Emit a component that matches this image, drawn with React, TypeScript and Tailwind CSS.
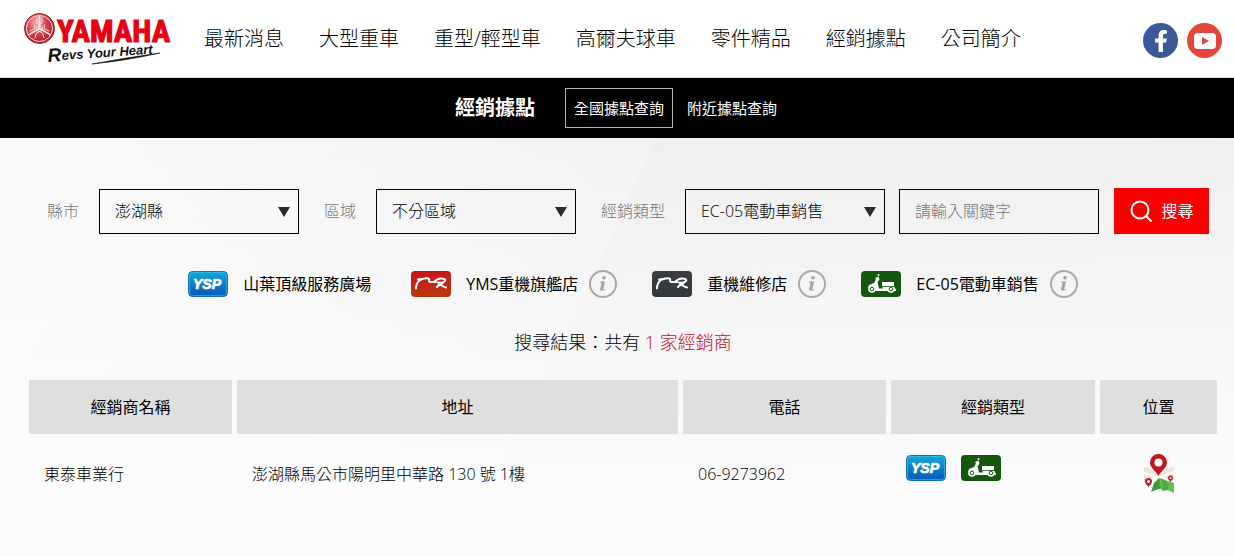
import { FaFacebookF } from 'react-icons/fa'

const navItems = ['最新消息', '大型重車', '重型/輕型車', '高爾夫球車', '零件精品', '經銷據點', '公司簡介']

const filters = [
  { id: 'city', label: '縣市', options: ['澎湖縣'] },
  { id: 'area', label: '區域', options: ['不分區域'] },
  { id: 'type', label: '經銷類型', options: ['EC-05電動車銷售'] },
]

const Logo = () => (
  <svg width="148" height="56" viewBox="0 0 148 56" role="img" aria-label="Yamaha">
    <defs>
      <radialGradient id="emblem" cx="40%" cy="30%" r="75%">
        <stop offset="0" stopColor="#f4b3b3" />
        <stop offset="0.45" stopColor="#d8424a" />
        <stop offset="1" stopColor="#b3121d" />
      </radialGradient>
    </defs>
    <circle cx="15.500" cy="17.500" r="15" fill="url(#emblem)" stroke="#8d2a30" />
    <circle cx="15.500" cy="17.500" r="13" fill="none" stroke="#f3dada" />
    <g fill="none" stroke="#f5e6e6" strokeLinecap="round">
      <path strokeWidth="2" d="M15.500 17.500V5.500M15.500 17.500l10.500 6M15.500 17.500L5 23.500" />
      <path strokeWidth="1" d="M13 6.500v5l2.500 2.500 2.500-2.500v-5M25 20l-5-2.500.5-3.500M6 20l5-2.500-.5-3.500M11 27l1.500-5 3-1.500 3 1.500 1.500 5" />
      <circle cx="15.500" cy="17.500" r="3" />
    </g>
    <text
      x="33"
      y="31"
      fontFamily="'Liberation Sans Narrow', 'Roboto Condensed', 'Liberation Sans', sans-serif"
      fontSize="31"
      fontWeight="700"
      fill="#e60012"
      stroke="#e60012"
      strokeWidth="1"
    >
      YAMAHA
    </text>
    <g transform="rotate(-4 24 50)" fill="#111" fontFamily="'Liberation Sans', sans-serif" fontStyle="italic" fontWeight="700">
      <text x="24" y="51" fontSize="19">
        R
      </text>
      <text x="38" y="50" fontSize="13">
        evs Your Heart
      </text>
    </g>
    <path d="M68 53Q100 47 136 42Q100 50 68 53z" fill="#111" stroke="#111" strokeWidth="0.6" />
  </svg>
)

const YoutubeIcon = () => (
  <svg width="22" height="16" viewBox="0 0 22 16" aria-hidden="true">
    <rect width="22" height="16" rx="4" fill="#fff" />
    <path d="M8 4v8l7-4z" fill="#e2473b" />
  </svg>
)

const YspBadge = () => (
  <svg width="40" height="26" viewBox="0 0 40 26" role="img" aria-label="YSP" className="shrink-0">
    <defs>
      <linearGradient id="ysp" x1="0" y1="0" x2="0" y2="1">
        <stop offset="0" stopColor="#12a8dc" />
        <stop offset="1" stopColor="#0457b8" />
      </linearGradient>
    </defs>
    <rect x="0.5" y="0.5" width="39" height="25" rx="4" fill="url(#ysp)" stroke="#0a76b4" />
    <rect x="1.500" y="1.500" width="37" height="23" rx="3" fill="none" stroke="#3fc4ee" strokeOpacity="0.6" />
    <text
      x="19"
      y="18"
      textAnchor="middle"
      fontFamily="'Liberation Sans', sans-serif"
      fontSize="14"
      fontWeight="700"
      fontStyle="italic"
      fill="#fff"
      stroke="#fff"
      strokeWidth="0.7"
    >
      YSP
    </text>
  </svg>
)

const MrBadge = ({ id, from, to }: { id: string; from: string; to: string }) => (
  <svg width="40" height="26" viewBox="0 0 40 26" aria-hidden="true" className="shrink-0">
    <defs>
      <linearGradient id={id} x1="0" y1="0" x2="0" y2="1">
        <stop offset="0" stopColor={from} />
        <stop offset="1" stopColor={to} />
      </linearGradient>
    </defs>
    <rect width="40" height="26" rx="4" fill={`url(#${id})`} />
    <g fill="none" stroke="#fff" strokeWidth="2" strokeLinecap="round" strokeLinejoin="round">
      <path d="M5 17.500c0-4 2-7 4-8.500M7 8.500l4-.5" />
      <path d="M10 8.500c3-1 7-2 8-.5s-1 2.500 1 3 4-1 6 0" />
      <path d="M23 11c2-2 4-3.500 7-3.500 3 0 5 1 4 2.500s-4 2-7 1.500" />
      <path d="M32 11.500c-1 2-5 2.500-6 4.500M28 13.500c2 0 4 2.500 7 3" />
    </g>
  </svg>
)

const ScooterBadge = () => (
  <svg width="40" height="26" viewBox="0 0 40 26" role="img" aria-label="EC-05" className="shrink-0">
    <rect width="40" height="26" rx="4" fill="#14570f" />
    <g fill="#fff">
      <circle cx="17.500" cy="4" r="1" />
      <path d="M14 7l3.500-1.500 1 3-2 3 1.500 6h4l-1-2.500V11h12v5.500l2 2V20H15l-3-1-1-2.500-4 .5 1-3 5-2 2-3.500z" />
      <circle cx="11" cy="18" r="3.800" />
      <circle cx="30" cy="18" r="3.800" />
    </g>
    <path d="M21 15.500h12" stroke="#14570f" strokeWidth="0.8" />
    <circle cx="11" cy="18" r="1.800" fill="none" stroke="#14570f" />
    <circle cx="30" cy="18" r="1.800" fill="none" stroke="#14570f" />
  </svg>
)

const InfoButton = ({ label }: { label: string }) => (
  <button type="button" aria-label={label} className="ml-[11px]">
    <svg width="28" height="28" viewBox="0 0 28 28" fill="none" className="block">
      <circle cx="14" cy="14" r="13" stroke="#a9a9a9" strokeWidth="2" />
      <circle cx="15" cy="7.800" r="1.800" fill="#a3a3a3" />
      <path d="M11 12h2.500l-1.500 8" stroke="#a3a3a3" strokeWidth="1" />
      <path d="M14.500 11.500l-2 8.500" stroke="#a3a3a3" strokeWidth="3" />
      <path d="M11.500 20h4.500" stroke="#a3a3a3" />
    </svg>
  </button>
)

const MapIcon = () => (
  <svg width="32" height="40" viewBox="0 0 32 40" aria-hidden="true">
    <path d="M1 13l8 2 7 6 8-6 7-2v13l-9-2-7-3-8 4-6 3z" fill="#ebe6dd" />
    <path d="M1 19l14 4M31 18l-13 5" fill="none" stroke="#fff" strokeWidth="2" />
    <path d="M8 38l3-9 5-5 3 1 1 9-6 1.500z" fill="#3f9b3a" />
    <path d="M16 24l15 5v10l-6-3-5 1-2-2z" fill="#64bb4f" />
    <path d="M19 25l1 12 5-1.500-1-8z" fill="#4fa844" />
    <path d="M15.500 22C13 17 7 14 7 8.500a8.500 8.500 0 0 1 17 0C24 14 18 17 15.500 22z" fill="#c4161c" />
    <circle cx="15.500" cy="8.500" r="4" fill="#fff" />
    <path d="M5.500 33C4.500 31 2 30 2 27.500a3.500 3.500 0 0 1 7 0C9 30 6.500 31 5.500 33z" fill="#c4161c" />
    <circle cx="5.500" cy="27.500" r="1.500" fill="#fff" />
    <path d="M27.500 28C27 26.500 25 26 25 24a2.500 2.500 0 0 1 5 0c0 2-2 2.500-2.500 4z" fill="#c4161c" />
    <circle cx="27.500" cy="24" r="1" fill="#fff" />
  </svg>
)

const Header = () => (
  <header className="flex h-[78px] items-center border-b border-[#d8d8d8] bg-white pr-3 pl-6">
    <a href="#home" className="shrink-0">
      <Logo />
    </a>
    <nav className="ml-8 flex gap-[35px] text-xl font-light whitespace-nowrap text-black">
      {navItems.map((item) => (
        <a key={item} href="#nav">
          {item}
        </a>
      ))}
    </nav>
    <div className="ml-auto flex gap-[9px] pt-1">
      <a
        href="#facebook"
        aria-label="Facebook"
        className="flex size-[35px] items-center justify-center rounded-full bg-[#3b5998] text-white"
      >
        <FaFacebookF size={22} />
      </a>
      <a
        href="#youtube"
        aria-label="YouTube"
        className="flex size-[35px] items-center justify-center rounded-full bg-[#e2473b]"
      >
        <YoutubeIcon />
      </a>
    </div>
  </header>
)

const SubNav = () => (
  <div className="flex h-[60px] items-center justify-center bg-black pr-0.5 text-white">
    <h1 className="mr-[30px] text-xl font-bold">經銷據點</h1>
    <a href="#all" className="flex h-10 items-center border border-[#b0b0b0] px-2 text-[15px]">
      全國據點查詢
    </a>
    <a href="#near" className="ml-[14px] text-[15px]">
      附近據點查詢
    </a>
  </div>
)

const SearchForm = () => (
  <form className="flex flex-wrap items-center justify-center pl-[22px]" onSubmit={(e) => e.preventDefault()}>
    {filters.map((filter) => (
      <div key={filter.id} className="mr-[25px] flex items-center last-of-type:mr-[14px]">
        <label htmlFor={filter.id} className="mr-5 font-light text-[#777]">
          {filter.label}
        </label>
        <div className="relative">
          <select
            id={filter.id}
            className="h-[45px] w-[200px] appearance-none border border-black bg-transparent px-[15px] font-light text-black"
          >
            {filter.options.map((option) => (
              <option key={option}>{option}</option>
            ))}
          </select>
          <svg width="12" height="10" className="pointer-events-none absolute top-[18px] right-[9px]">
            <path d="M0 0h12L6 10z" fill="#2b2b2b" />
          </svg>
        </div>
      </div>
    ))}
    <input
      type="text"
      aria-label="關鍵字"
      placeholder="請輸入關鍵字"
      className="h-[45px] w-[200px] border border-black bg-transparent px-[15px] font-light placeholder:text-[#777]"
    />
    <button type="submit" className="ml-[15px] flex h-[46px] w-[95px] items-center justify-center gap-2 bg-[#fa0000] text-white">
      <svg width="24" height="24" viewBox="0 0 24 24" fill="none" stroke="#fff" strokeWidth="2" aria-hidden="true">
        <circle cx="10" cy="11" r="8.500" />
        <path d="M16 17l5.500 5.500" />
      </svg>
      搜尋
    </button>
  </form>
)

const Legend = () => (
  <ul className="mt-[36px] flex flex-wrap items-center justify-center gap-[35px] pl-8">
    <li className="mr-[5px] flex items-center">
      <YspBadge />
      <span className="ml-[15px]">山葉頂級服務廣場</span>
    </li>
    <li className="flex items-center">
      <MrBadge id="mr-red" from="#c8141c" to="#b83a0c" />
      <span className="ml-[15px]">YMS重機旗艦店</span>
      <InfoButton label="YMS重機旗艦店說明" />
    </li>
    <li className="flex items-center">
      <MrBadge id="mr-gray" from="#3a3d42" to="#33363b" />
      <span className="ml-[15px]">重機維修店</span>
      <InfoButton label="重機維修店說明" />
    </li>
    <li className="flex items-center">
      <ScooterBadge />
      <span className="ml-[15px]">EC-05電動車銷售</span>
      <InfoButton label="EC-05電動車銷售說明" />
    </li>
  </ul>
)

const DealerTable = () => (
  <div className="mt-[19px] pr-3 pl-6">
    <table className="w-full table-fixed border-separate border-spacing-[5px] text-black">
      <colgroup>
        <col className="w-[203px]" />
        <col className="w-[441px]" />
        <col className="w-[203px]" />
        <col className="w-[204px]" />
        <col className="w-[117px]" />
      </colgroup>
      <thead>
        <tr className="h-[54px]">
          {['經銷商名稱', '地址', '電話', '經銷類型', '位置'].map((title) => (
            <th key={title} className="bg-[#dfdfdf] font-normal">
              {title}
            </th>
          ))}
        </tr>
      </thead>
      <tbody className="font-light">
        <tr className="h-[70px]">
          <td className="px-[15px]">東泰車業行</td>
          <td className="px-[15px]">澎湖縣馬公市陽明里中華路 130 號 1樓</td>
          <td className="px-[15px]">06-9273962</td>
          <td className="px-[15px] pb-3">
            <div className="flex gap-[15px]">
              <YspBadge />
              <ScooterBadge />
            </div>
          </td>
          <td>
            <a href="#map" aria-label="位置" className="flex justify-center">
              <MapIcon />
            </a>
          </td>
        </tr>
      </tbody>
    </table>
  </div>
)

const App = () => {
  return (
    <div className="min-h-screen bg-[#fcfcfc] font-['Open_Sans','Noto_Sans_CJK_TC',sans-serif] text-base text-black">
      <Header />
      <SubNav />
      <main className="bg-[linear-gradient(to_bottom,transparent,#fcfcfc_90%),linear-gradient(115deg,#fafafa,#f2f2f2_46%,#efefef_46%,#f0f0f0)] pt-[50px] pb-10">
        <SearchForm />
        <Legend />
        <p className="mt-[30px] pl-3 text-center text-lg font-light">
          搜尋結果：共有 <span className="text-[#c1121c]">1 家經銷商</span>
        </p>
        <DealerTable />
      </main>
    </div>
  )
}
export default App
